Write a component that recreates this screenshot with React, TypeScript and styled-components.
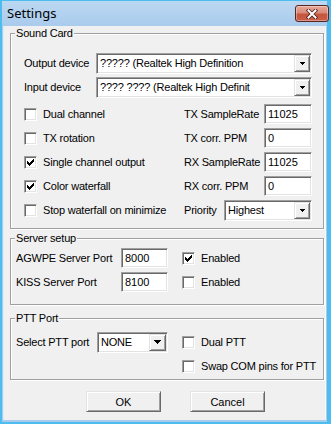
import styled, { createGlobalStyle } from 'styled-components';

const GlobalStyle = createGlobalStyle`
  * { box-sizing: border-box; }
  html, body { margin: 0; padding: 0; background: #f0f0f0; }
  body {
    font-family: "Liberation Sans", Arial, sans-serif;
    font-size: 11px;
    letter-spacing: -0.2px;
    color: #000;
  }
`;

const CheckMark = () => (
  <svg width="7" height="7" viewBox="0 0 7 7" shapeRendering="crispEdges">
    <path
      d="M0 2h1v3H0z M1 3h1v3H1z M2 4h1v3H2z M3 3h1v3H3z M4 2h1v3H4z M5 1h1v3H5z M6 0h1v3H6z"
      fill="#000"
    />
  </svg>
);

const DropArrow = ({ big }: { big?: boolean }) =>
  big ? (
    <svg width="7" height="4" viewBox="0 0 7 4" shapeRendering="crispEdges">
      <path d="M0 0h7v1H0z M1 1h5v1H1z M2 2h3v1H2z M3 3h1v1H3z" fill="#000" />
    </svg>
  ) : (
    <svg width="5" height="3" viewBox="0 0 5 3" shapeRendering="crispEdges">
      <path d="M0 0h5v1H0z M1 1h3v1H1z M2 2h1v1H2z" fill="#000" />
    </svg>
  );

const CloseGlyph = () => (
  <svg width="12" height="10" viewBox="0 0 12 10">
    <path d="M2.5 1.5 L9.5 8.5 M9.5 1.5 L2.5 8.5" stroke="#4a1c18" strokeWidth="3.6" strokeLinecap="square" />
    <path d="M2.5 1.5 L9.5 8.5 M9.5 1.5 L2.5 8.5" stroke="#fff" strokeWidth="2" strokeLinecap="square" />
  </svg>
);

type ComboProps = { width: number; value: string; big?: boolean };

const Combo = ({ width, value, big }: ComboProps) => (
  <ComboBox $width={width}>
    <ComboText>{value}</ComboText>
    <ComboButton $big={big}>
      <DropArrow big={big} />
    </ComboButton>
  </ComboBox>
);

const Option = ({ label, checked }: { label: string; checked?: boolean }) => (
  <CheckLabel>
    <CheckBox>{checked && <CheckMark />}</CheckBox>
    {label}
  </CheckLabel>
);

const options = [
  { label: 'Dual channel', checked: false, field: 'TX SampleRate', value: '11025' },
  { label: 'TX rotation', checked: false, field: 'TX corr. PPM', value: '0' },
  { label: 'Single channel output', checked: true, field: 'RX SampleRate', value: '11025' },
  { label: 'Color waterfall', checked: true, field: 'RX corr. PPM', value: '0' },
];

export default function App() {
  return (
    <>
      <GlobalStyle />
      <Window>
        <TitleBar>
          <Caption>Settings</Caption>
          <CloseButton>
            <CloseGlyph />
          </CloseButton>
        </TitleBar>

        <Client>
          <Group $mt={7}>
            <GroupTitle>Sound Card</GroupTitle>
            <GroupBody $pad="11px 11px 6px 13px">
              <Row>
                <DeviceLabel>Output device</DeviceLabel>
                <Combo width={216} value="????? (Realtek High Definition" />
              </Row>
              <Row>
                <DeviceLabel>Input device</DeviceLabel>
                <Combo width={216} value="???? ???? (Realtek High Definit" />
              </Row>
              <Options>
                {options.map((o) => (
                  <Row key={o.label}>
                    <OptionCell>
                      <Option label={o.label} checked={o.checked} />
                    </OptionCell>
                    <span>{o.field}</span>
                    <Edit $width={48} readOnly value={o.value} />
                  </Row>
                ))}
                <Row>
                  <OptionCell>
                    <Option label="Stop waterfall on minimize" />
                  </OptionCell>
                  <span>Priority</span>
                  <PushRight>
                    <Combo width={88} value="Highest" />
                  </PushRight>
                </Row>
              </Options>
            </GroupBody>
          </Group>

          <Group $mt={9}>
            <GroupTitle>Server setup</GroupTitle>
            <GroupBody $pad="1px 0 10px 5px">
              <PortRow>
                <Field>
                  <FieldLabel $width={105}>AGWPE Server Port</FieldLabel>
                  <Edit $width={47} readOnly value="8000" />
                </Field>
                <Option label="Enabled" checked />
              </PortRow>
              <PortRow>
                <Field>
                  <FieldLabel $width={105}>KISS Server Port</FieldLabel>
                  <Edit $width={47} readOnly value="8100" />
                </Field>
                <Option label="Enabled" />
              </PortRow>
            </GroupBody>
          </Group>

          <Group $mt={13}>
            <GroupTitle>PTT Port</GroupTitle>
            <GroupBody $pad="5px 0 1px 5px">
              <PortRow>
                <Field>
                  <FieldLabel $width={81}>Select PTT port</FieldLabel>
                  <Combo width={71} value="NONE" big />
                </Field>
                <Option label="Dual PTT" />
              </PortRow>
              <PortRow>
                <span />
                <Option label="Swap COM pins for PTT" />
              </PortRow>
            </GroupBody>
          </Group>

          <ButtonRow>
            <Button>OK</Button>
            <Button>Cancel</Button>
          </ButtonRow>
        </Client>
      </Window>
    </>
  );
}

const Window = styled.div`
  width: 331px;
  height: 424px;
  display: flex;
  flex-direction: column;
  background: linear-gradient(#bcd8f2, #a9cbec 25px, #a9cbec);
  border-style: solid;
  border-color: #4dbdf0;
  border-width: 1px 4px 2px 2px;
`;

const TitleBar = styled.div`
  height: 25px;
  flex: none;
  display: flex;
  align-items: flex-start;
  justify-content: space-between;
  padding-left: 5px;
`;

const Caption = styled.span`
  font-family: "Noto Sans", "Open Sans", sans-serif;
  font-size: 13px;
  letter-spacing: 0;
  line-height: 25px;
  color: #000;
`;

const CloseButton = styled.div`
  width: 34px;
  height: 17px;
  margin: 4px -2px 0 0;
  border: 1px solid #5a2420;
  border-radius: 3px;
  background: linear-gradient(#e6a99c, #d98a78 45%, #c7543c 55%, #c9604a);
  box-shadow: inset 0 0 0 1px rgba(255, 255, 255, 0.35);
  display: flex;
  align-items: center;
  justify-content: center;
`;

const Client = styled.div`
  flex: 1;
  display: flex;
  flex-direction: column;
  margin: 0 1px 2px 1px;
  padding-left: 6px;
  background: #f0f0f0;
  border-left: 1px solid #dcecfb;
  border-right: 1px solid #f6fafe;
`;

const Group = styled.div<{ $mt: number }>`
  margin: ${(p) => p.$mt}px 1px 0 0;
  border: 1px solid #a0a0a0;
  box-shadow: inset 1px 1px 0 #fff, 1px 1px 0 #fff;
`;

const GroupTitle = styled.div`
  width: fit-content;
  margin: -7px 0 0 4px;
  padding: 0 1px;
  line-height: 13px;
  background: #f0f0f0;
`;

const GroupBody = styled.div<{ $pad: string }>`
  padding: ${(p) => p.$pad};
`;

const Row = styled.div`
  height: 24px;
  display: flex;
  align-items: center;
`;

const Options = styled.div`
  margin-top: 3px;
`;

const DeviceLabel = styled.span`
  width: 72px;
  flex: none;
`;

const OptionCell = styled.div`
  width: 160px;
  flex: none;
`;

const PushRight = styled.div`
  margin-left: auto;
`;

const PortRow = styled.div`
  height: 24px;
  display: grid;
  grid-template-columns: 166px auto;
  align-items: center;
`;

const Field = styled.div`
  display: flex;
  align-items: center;
`;

const FieldLabel = styled.span<{ $width: number }>`
  width: ${(p) => p.$width}px;
  flex: none;
`;

const sunken = `
  border: 1px solid;
  border-color: #a0a0a0 #fff #fff #a0a0a0;
  box-shadow: inset 1px 1px 0 #696969, inset -1px -1px 0 #e3e3e3;
`;

const Edit = styled.input<{ $width: number }>`
  ${sunken}
  width: ${(p) => p.$width}px;
  height: 20px;
  margin-left: auto;
  padding: 0 3px;
  font: inherit;
  color: #000;
  background: #fff;
  outline: none;
  ${Field} & {
    margin-left: 0;
  }
`;

const ComboBox = styled.div<{ $width: number }>`
  ${sunken}
  width: ${(p) => p.$width}px;
  height: 21px;
  padding: 1px;
  background: #fff;
  display: flex;
  align-items: stretch;
`;

const ComboText = styled.span`
  flex: 1;
  min-width: 0;
  padding-left: 2px;
  overflow: hidden;
  white-space: nowrap;
  line-height: 17px;
`;

const ComboButton = styled.span<{ $big?: boolean }>`
  width: ${(p) => (p.$big ? 17 : 16)}px;
  flex: none;
  background: #f0f0f0;
  border: 1px solid;
  border-color: #e3e3e3 #696969 #696969 #e3e3e3;
  box-shadow: inset 1px 1px 0 #fff, inset -1px -1px 0 #a0a0a0;
  display: flex;
  align-items: center;
  justify-content: center;
`;

const CheckLabel = styled.label`
  display: flex;
  align-items: center;
  gap: 6px;
  white-space: nowrap;
`;

const CheckBox = styled.span`
  ${sunken}
  width: 13px;
  height: 13px;
  flex: none;
  background: #fff;
  display: flex;
  align-items: center;
  justify-content: center;
`;

const ButtonRow = styled.div`
  margin-top: 11px;
  padding-left: 76px;
  display: flex;
  gap: 29px;
`;

const Button = styled.button`
  width: 75px;
  height: 21px;
  padding: 0;
  font: inherit;
  color: #000;
  background: #f0f0f0;
  border: 1px solid;
  border-color: #e3e3e3 #696969 #696969 #e3e3e3;
  box-shadow: inset 1px 1px 0 #fff, inset -1px -1px 0 #a0a0a0;
`;
